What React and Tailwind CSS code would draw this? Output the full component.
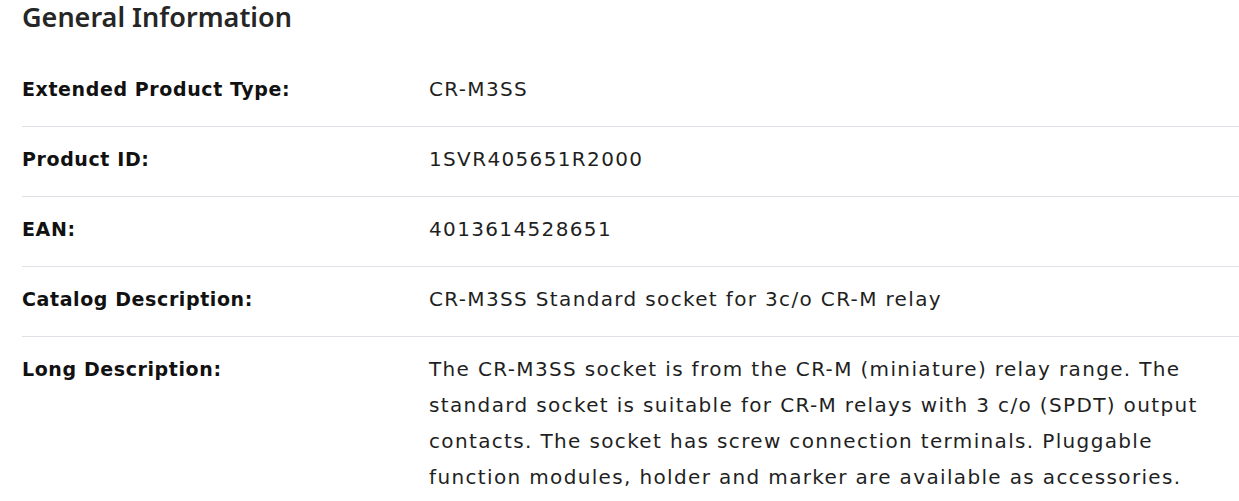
const rows = [
  { label: 'Extended Product Type:', value: 'CR-M3SS' },
  { label: 'Product ID:', value: '1SVR405651R2000' },
  { label: 'EAN:', value: '4013614528651' },
  { label: 'Catalog Description:', value: 'CR-M3SS Standard socket for 3c/o CR-M relay' },
  {
    label: 'Long Description:',
    value:
      'The CR-M3SS socket is from the CR-M (miniature) relay range. The standard socket is suitable for CR-M relays with 3 c/o (SPDT) output contacts. The socket has screw connection terminals. Pluggable function modules, holder and marker are available as accessories.',
  },
]

export default function App() {
  return (
    <div className="min-h-screen bg-white pl-[22px] text-[#1f1f1f] font-['DejaVu_Sans',sans-serif]">
      {/* Heading */}
      <h2 className="-mt-[2px] text-[27px] leading-[38px] font-semibold text-[#262626] font-['Noto_Sans',sans-serif]">
        General Information
      </h2>

      <div className="mt-[21px]">
        {rows.map((row, i) => (
          <div
            key={row.label}
            className={`flex pt-[14px] pb-[19px] ${i < rows.length - 1 ? 'border-b border-[#e0e0e6]' : ''}`}
          >
            <div className="w-[407px] shrink-0 text-[19px] leading-[36px] font-bold tracking-[0.6px] text-[#111]">
              {row.label}
            </div>
            <div className="w-[785px] text-[20px] leading-[36px] tracking-[1.35px]">{row.value}</div>
          </div>
        ))}
      </div>
    </div>
  )
}
